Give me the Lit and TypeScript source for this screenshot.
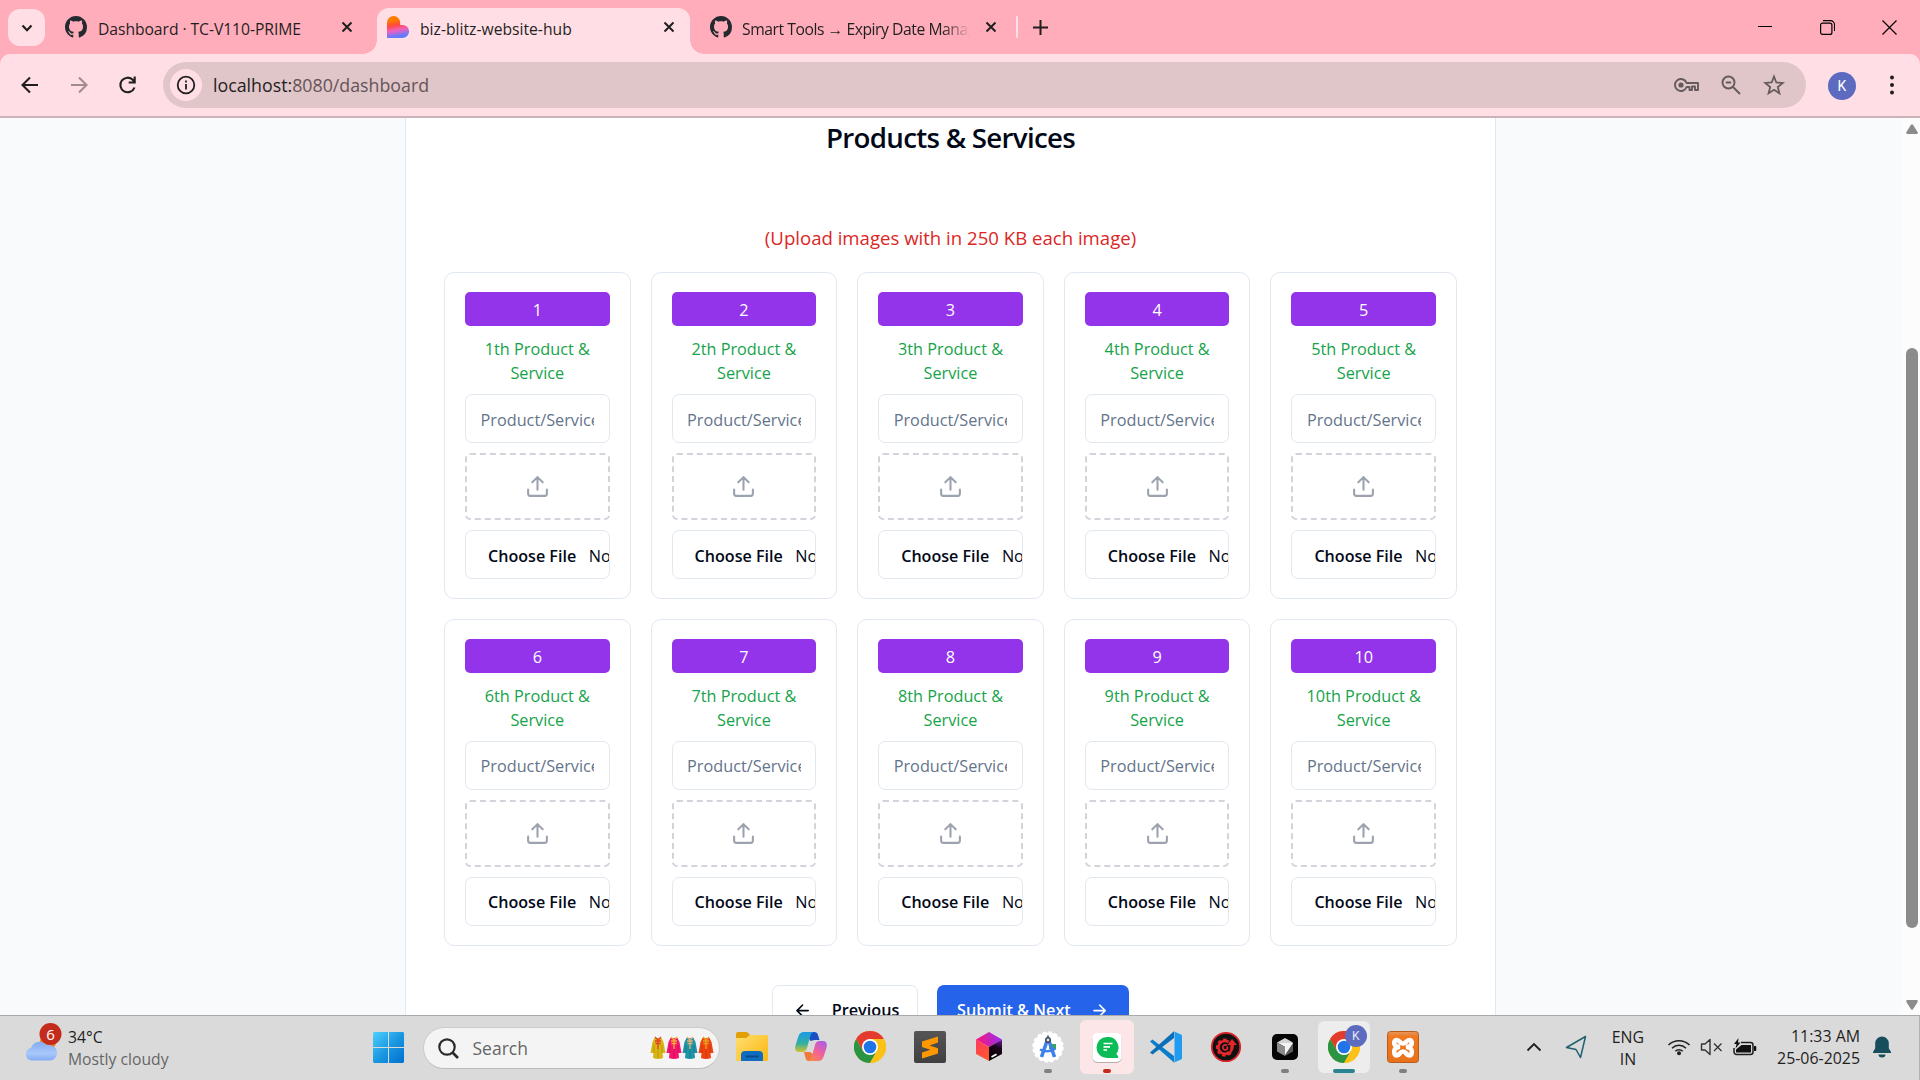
import { LitElement, html, svg, css, nothing } from "lit";
import { customElement, property } from "lit/decorators.js";
import { classMap } from "lit/directives/class-map.js";

const GITHUB =
  "M8 0C3.58 0 0 3.58 0 8c0 3.54 2.29 6.53 5.47 7.59.4.07.55-.17.55-.38 0-.19-.01-.82-.01-1.49-2.01.37-2.53-.49-2.69-.94-.09-.23-.48-.94-.82-1.13-.28-.15-.68-.52-.01-.53.63-.01 1.08.58 1.23.82.72 1.21 1.87.87 2.33.66.07-.52.28-.87.51-1.07-1.78-.2-3.64-.89-3.64-3.95 0-.87.31-1.59.82-2.15-.08-.2-.36-1.02.08-2.12 0 0 .67-.21 2.2.82.64-.18 1.32-.27 2-.27.68 0 1.36.09 2 .27 1.53-1.04 2.2-.82 2.2-.82.44 1.1.16 1.92.08 2.12.51.56.82 1.27.82 2.15 0 3.07-1.87 3.75-3.65 3.95.29.25.54.73.54 1.48 0 1.07-.01 1.93-.01 2.2 0 .21.15.46.55.38A8.013 8.013 0 0016 8c0-4.42-3.58-8-8-8z";

const icon = (size: number, box: number, body: unknown) =>
  html`<svg width=${size} height=${size} viewBox="0 0 ${box} ${box}" fill="none">${body}</svg>`;

const githubIcon = icon(22, 16, svg`<path fill="#24292f" d=${GITHUB} />`);

const closeIcon = icon(12, 12, svg`<path d="M1.500 1.500l9 9M10.500 1.500l-9 9" stroke="#1f1f1f" stroke-width="2" />`);

const heartIcon = icon(
  22,
  22,
  svg`<defs><linearGradient id="heart" x1="6" y1="0" x2="10" y2="22" gradientUnits="userSpaceOnUse">
      <stop offset=".2" stop-color="#ff7a00" /><stop offset=".42" stop-color="#ff4a3d" />
      <stop offset=".65" stop-color="#f060c0" /><stop offset=".95" stop-color="#5c7bff" /></linearGradient></defs>
    <path fill="url(#heart)" d="M0 6.600a6.600 6.600 0 0 1 13.200 0v2.300h2.300a6.500 6.500 0 0 1 0 13.100H0z" />`
);

/* Chrome's wheel, centred in a 32 unit box */
const chromeWheel = svg`
  <circle cx="16" cy="16" r="16" fill="#fbbc04" />
  <path fill="#e33b2e" d="M2.140 8A16 16 0 0 1 29.860 8H16l-6.900 12z" />
  <path fill="#2a9443" d="M2.140 8A16 16 0 0 0 16 32l6.930-12L16 16l-6.930 4z" />
  <path fill="#fbc116" d="M29.860 8A16 16 0 0 1 16 32l6.930-12A8 8 0 0 0 16 8z" />
  <circle cx="16" cy="16" r="8" fill="#fff" />
  <circle cx="16" cy="16" r="6.300" fill="#1f74e8" />`;

const appIcons = {
  explorer: svg`<defs><linearGradient id="fold" x1="0" y1="4" x2="26" y2="30" gradientUnits="userSpaceOnUse">
      <stop stop-color="#ffdf70" /><stop offset="1" stop-color="#fbbb1c" /></linearGradient></defs>
    <path fill="#e2a006" d="M0 3a2 2 0 0 1 2-2h9l3 3v6H0z" />
    <path fill="url(#fold)" d="M0 7h10l4-3h16.500a1.500 1.500 0 0 1 1.500 1.500v23a1.500 1.500 0 0 1-1.500 1.500H1.500A1.500 1.500 0 0 1 0 28.500z" />
    <path fill="#0f6cbf" d="M5 30v-6a4 4 0 0 1 4-4h14a4 4 0 0 1 4 4v6z" />
    <path stroke="#0a4a8c" stroke-width="1.800" stroke-linecap="round" d="M10.500 25.500h11.500" />`,
  copilot: svg`<defs>
      <linearGradient id="cpa" x1="8" y1="1" x2="8" y2="22" gradientUnits="userSpaceOnUse">
        <stop stop-color="#1a9be8" /><stop offset=".55" stop-color="#35b0a0" /><stop offset="1" stop-color="#e8c51a" /></linearGradient>
      <linearGradient id="cpb" x1="28" y1="9" x2="14" y2="30" gradientUnits="userSpaceOnUse">
        <stop stop-color="#a95bea" /><stop offset=".5" stop-color="#f0619a" /><stop offset="1" stop-color="#ff8b45" /></linearGradient></defs>
    <path fill="#1b4fc4" d="M10 1h9a4 4 0 0 1 4 3l1.500 5h-5l-4 1z" />
    <path fill="url(#cpa)" d="M9 1h9.500c-2 .5-2.700 2.500-3.300 4.500L12 17c-.8 2.800-2 4-4.500 4H4c-3.500 0-4.500-3-3.500-6.500l2.800-9C4.300 2.500 6 1 9 1z" />
    <path fill="#f07a3c" d="M9 21h6l3 2-2 7h-2.500c-1.500 0-2.300-1-2.800-2.500z" />
    <path fill="url(#cpb)" d="M23 30h-9.500c2-.5 2.700-2.500 3.300-4.500L20 14c.8-2.800 2-4 4.500-4H28c3.500 0 4.500 3 3.500 6.500l-2.800 9C27.700 28.500 26 30 23 30z" />`,
  chrome: chromeWheel,
  sublime: svg`<defs><linearGradient id="sub" x1="0" y1="0" x2="0" y2="1"><stop stop-color="#555" /><stop offset="1" stop-color="#404040" /></linearGradient></defs>
    <rect width="32" height="32" rx="2" fill="url(#sub)" />
    <path fill="#ff9800" d="M24 5.500v6l-8.500 3L24 17.300v5.200L8 27.500v-6l8.500-2.800L8 16v-5.500z" />`,
  hexagon: svg`<defs>
      <linearGradient id="hxa" x1="3" y1="10" x2="14" y2="30" gradientUnits="userSpaceOnUse"><stop stop-color="#ff3b5c" /><stop offset="1" stop-color="#ff5a2a" /></linearGradient>
      <linearGradient id="hxb" x1="5" y1="9" x2="28" y2="5" gradientUnits="userSpaceOnUse"><stop stop-color="#f3187f" /><stop offset="1" stop-color="#9a2df0" /></linearGradient>
      <linearGradient id="hxc" x1="28" y1="8" x2="20" y2="30" gradientUnits="userSpaceOnUse"><stop stop-color="#7a1db0" /><stop offset=".4" stop-color="#1c0618" /><stop offset="1" stop-color="#000" /></linearGradient></defs>
    <path fill="url(#hxb)" d="M16 1 29 8.500 16 16 3 8.500z" /><path fill="url(#hxa)" d="M3 8.500 16 16v14L3 23z" />
    <path fill="url(#hxc)" d="M29 8.500V23l-13 7V16z" /><path stroke="#fff" stroke-width="1.800" d="m18.500 26 5-2.800" />`,
  studio: svg`<circle cx="16" cy="16" r="14.600" fill="#fff" /><circle cx="16" cy="16" r="14.800" stroke="#fff" stroke-width="1.800" stroke-dasharray="3.600 2.200" />
    <path fill="#36a852" d="M17 13h7v5h-7z" />
    <path stroke="#3f7fe8" stroke-width="3.600" d="M15.500 8.500 9.500 26M16.500 8.500l6 17.500" />
    <path stroke="#3f7fe8" stroke-width="2.400" d="M8 18.500q8 4 15.500-1" />
    <circle cx="16" cy="9" r="2.200" stroke="#3c4650" stroke-width="1.500" fill="#dfe6ee" /><path stroke="#3c4650" stroke-width="1.500" d="M16 4.500V7" />`,
  chat: svg`<rect x="1.500" y="3" width="29" height="29" rx="5" fill="#9c9195" opacity=".7" /><rect x="1.500" y="2" width="29" height="29" rx="5" fill="#fff" />
    <path fill="#0cbc56" d="M16 6a10.500 10.500 0 1 0 0 21h10.500c1 0 1-1.500.3-2.300l-1.500-1.800A10.500 10.500 0 0 0 16 6z" />
    <path stroke="#fff" stroke-width="1.700" d="M12.500 12.500h9M12.500 15.800h6.500M12.500 19h3.500" />`,
  code: svg`<path fill="#0a7dcb" d="M0 10.500 2.500 8.500 24 25v6.500z" /><path fill="#0a6fb8" d="M0 21.500l2.500 2L24 7V.300z" />
    <path fill="#1f9cf0" d="M23.500.2 31 3.500a1.500 1.500 0 0 1 1 1.400v22.200a1.500 1.500 0 0 1-1 1.400l-7.500 3.300c1-.6 1-1.300 1-2.300V2.500c0-1 0-1.700-1-2.300z" />`,
  gear: svg`<circle cx="16" cy="16" r="14.200" fill="#111" stroke="#d9262b" stroke-width="1.800" />
    <path stroke="#e3272c" stroke-width="3" stroke-dasharray="3.200 2.300" d="M20.500 21.500A7.500 7.500 0 1 1 19 10.200" />
    <path stroke="#e3272c" stroke-width="2.600" d="M19.500 21A6.500 6.500 0 1 1 18.500 11" />
    <path fill="#e3272c" d="m22 8 5 6h-3c0 4.500-2 8.500-7 10.500 2.800-3 3.500-6.500 3.400-10.500h-3z" />
    <path stroke="#e3272c" stroke-width="1.700" d="M17 14.500a2.500 2.500 0 1 0 .3 3.400l.2-2.400" />`,
  cube: svg`<rect x="3" y="3" width="26" height="26" rx="5" fill="#050505" />
    <path fill="#d4d4d4" d="m16 7 8 4.500-8 4.500-8-4.500z" /><path fill="#8b8b8b" d="m8 11.500 8 4.500v9l-8-4.500z" /><path fill="#5a5a5a" d="M24 11.500 16 16v9l8-4.500z" /><path fill="#f4f4f4" d="M10 12h14l-8 12v-8.500z" />`,
  xampp: svg`<defs><linearGradient id="xam" x1="0" y1="0" x2="0" y2="1"><stop stop-color="#e59a60" /><stop offset=".15" stop-color="#f07a24" /><stop offset="1" stop-color="#e8721c" /></linearGradient></defs>
    <rect x=".5" y=".5" width="31" height="31" rx="3" fill="url(#xam)" stroke="#b85c1a" />
    <path stroke="#fff" stroke-width="4.600" stroke-linejoin="round" stroke-linecap="round" d="M11 15.500C6.500 16 6 9 9.500 9s3 3.500 6.500 3.500S19 9 22.500 9s3 7-1.500 6.500M11 16.500C6.500 16 6 24.500 9.500 24.500s3-4 6.500-4 3 4 6.500 4 3-8.500-1.500-8" />
    <path stroke="#fff" stroke-width="2.500" d="M9 16h3M20 16h3" />`,
};

type AppName = keyof typeof appIcons;
interface TaskApp { name: AppName; state?: "alert" | "active"; mark?: boolean; }

const apps: TaskApp[] = [
  { name: "explorer" },
  { name: "copilot" },
  { name: "chrome" },
  { name: "sublime" },
  { name: "hexagon" },
  { name: "studio", mark: true },
  { name: "chat", state: "alert", mark: true },
  { name: "code" },
  { name: "gear" },
  { name: "cube", mark: true },
  { name: "chrome", state: "active", mark: true },
  { name: "xampp", mark: true },
];

@customElement("product-card")
class ProductCard extends LitElement {
  @property({ type: Number }) index = 1;

  static styles = css`
    :host {
      display: flex;
      flex-direction: column;
      gap: 10px;
      box-sizing: border-box;
      min-width: 0;
      padding: 19px 20px 0;
      border: 1px solid #e2e8f0;
      border-radius: 10px;
      font-size: 16.250px;
    }
    .number {
      height: 34px;
      box-sizing: border-box;
      padding-top: 2px;
      line-height: 33px;
      border-radius: 5px;
      background: #9333ea;
      color: #fff;
      text-align: center;
    }
    .label {
      height: 48px;
      box-sizing: border-box;
      padding-top: 1px;
      line-height: 24px;
      color: #16a34a;
      text-align: center;
      white-space: nowrap;
    }
    .field {
      height: 49px;
      flex: none;
      box-sizing: border-box;
      border: 1px solid #e2e8f0;
      border-radius: 7px;
      display: flex;
      align-items: center;
      overflow: hidden;
      white-space: nowrap;
    }
    .name { padding: 2px 14.500px 0; color: #64748b; }
    .name span { overflow: hidden; flex: 1; min-width: 0; line-height: 24px; }
    .file { padding: 2px 0 0 22px; gap: 12.500px; color: #020817; }
    .file b { font-weight: 600; font-size: 16.100px; }
    .drop {
      height: 67px;
      box-sizing: border-box;
      border: 2px dashed #d1d5db;
      border-radius: 5px;
      display: flex;
      align-items: center;
      justify-content: center;
    }
  `;

  render() {
    return html`
      <div class="number">${this.index}</div>
      <div class="label">${this.index}th Product &amp;<br />Service</div>
      <div class="field name"><span>Product/Service Name</span></div>
      <div class="drop">
        ${icon(
          25,
          24,
          svg`<path d="M21 15v4a2 2 0 0 1-2 2H5a2 2 0 0 1-2-2v-4M17 8l-5-5-5 5M12 3v12" stroke="#9ca3af" stroke-width="2" stroke-linecap="round" stroke-linejoin="round" />`
        )}
      </div>
      <div class="field file"><b>Choose File</b><span>No file chosen</span></div>
    `;
  }
}

@customElement("app-root")
class AppRoot extends LitElement {
  static styles = css`
    :host {
      display: flex;
      flex-direction: column;
      width: 1920px;
      height: 1080px;
      overflow: hidden;
      font-family: "Open Sans", "Noto Sans", sans-serif;
      color: #1f1f1f;
      background: #fff;
    }
    * { box-sizing: border-box; }
    svg { display: block; flex: none; }

    .strip { display: flex; height: 54px; background: #ffadbb; flex: none; }
    .search-tabs {
      width: 37px; height: 37px; margin: 9px 10px 0 8px; border-radius: 12px;
      background: #ffdfe5; display: flex; align-items: center; justify-content: center;
    }
    .tab { display: flex; align-items: center; height: 46px; margin-top: 8px; padding: 0 15px 8px 10px; font-size: 15.700px; }
    .tab .title { flex: 1; margin-left: 11px; white-space: nowrap; overflow: hidden; line-height: 24px; padding-top: 3px; }
    .tab.first { width: 312px; padding-right: 14px; margin-right: 10px; }
    .tab.first .title { letter-spacing: -0.060px; }
    .tab.current { width: 313px; background: #ffdfe5; border-radius: 12px 12px 0 0; position: relative; }
    .tab.current::before, .tab.current::after {
      content: ""; position: absolute; bottom: 0; width: 14px; height: 14px;
    }
    .tab.current::before { left: -14px; background: radial-gradient(circle at 0 0, #ffadbb 13.500px, #ffdfe5 14px); }
    .tab.current::after { right: -14px; background: radial-gradient(circle at 100% 0, #ffadbb 13.500px, #ffdfe5 14px); }
    .tab.last { width: 316px; margin-left: 10px; padding-right: 19px; }
    .tab.last .title {
      flex: none; width: 228px; margin-left: 10px; letter-spacing: -0.450px;
      mask-image: linear-gradient(90deg, #000 88%, transparent 100%);
      -webkit-mask-image: linear-gradient(90deg, #000 88%, transparent 100%);
    }
    .tab.last svg:last-child { margin-left: auto; }
    .divider { width: 2px; height: 22px; margin-top: 16px; background: #ffdfe5; border-radius: 1px; }
    .new-tab { margin: 19.500px 0 0 15px; }
    .window-buttons { display: flex; margin: 20px 23.500px 0 auto; gap: 47px; }

    .toolbar-wrap { background: #ffadbb; flex: none; }
    .toolbar {
      display: flex; align-items: center; height: 64px; padding: 0 20px 0 20px;
      background: #ffdfe5; border-radius: 10px 10px 0 0; border-bottom: 2px solid #cdb3b8;
    }
    .toolbar > svg { margin-right: 28.500px; }
    .address {
      display: flex; align-items: center; width: 1643px; height: 46px; border-radius: 24px;
      background: #e0c5c9; padding: 0 20px 0 7px; margin-left: -2.500px;
    }
    .info { width: 32px; height: 32px; border-radius: 50%; background: #ffdfe5; display: flex; align-items: center; justify-content: center; }
    .url { flex: 1; margin-left: 11px; font-size: 17.800px; color: #655457; }
    .url span { color: #1f1f1f; }
    .address-icons { display: flex; align-items: center; gap: 20px; }
    .avatar {
      width: 28px; height: 28px; border-radius: 50%; background: #5c6bc0; color: #fff; margin: 1px 33px 0 22px;
      font: 14px/28px Roboto, sans-serif; text-align: center;
    }
    .toolbar > svg.dots { margin: 0; }

    .viewport { display: flex; height: 897px; flex: none; background: #f8fafc; overflow: hidden; }
    .page { flex: 1; display: flex; justify-content: center; }
    .panel {
      width: 1091px; height: 1000px; background: #fff; border: solid #e2e8f0; border-width: 0 1px;
      padding: 0 38px; display: flex; flex-direction: column; flex: none;
    }
    h1 {
      margin: 0; height: 38px; line-height: 38px; text-align: center; color: #020817;
      font-size: 27.700px; font-weight: 600; letter-spacing: -0.720px;
    }
    .note { margin-top: 67px; height: 29px; line-height: 29px; text-align: center; color: #dc2626; font-size: 18.600px; }
    .grid {
      display: grid; grid-template-columns: repeat(5, minmax(0, 1fr)); gap: 20px; margin: 20px 0 39.500px;
      grid-auto-rows: 326.800px;
    }
    .actions { display: flex; justify-content: center; gap: 19px; font-size: 16.250px; font-weight: 600; }
    .button { height: 50px; display: flex; align-items: center; border-radius: 7px; white-space: nowrap; }
    .previous { width: 146px; border: 1px solid #e2e8f0; color: #020817; padding-left: 20px; gap: 19.500px; }
    .submit { width: 192px; background: #2563eb; color: #fff; padding-left: 20px; gap: 19px; }
    .scrollbar { width: 19px; background: #fcfcfc; display: flex; flex-direction: column; align-items: center; padding: 6px 0 5px 3px; }
    .thumb { width: 12px; height: 580px; margin: 214px 0 auto; border-radius: 6px; background: #8b8b8b; }

    .taskbar {
      display: flex; height: 65px; flex: none; background: #dadada; border-top: 1px solid #a9a9a9;
      border-right: 1px solid #b4b4b4; padding-left: 24px;
    }
    .weather { width: 349px; display: flex; margin-top: 6px; gap: 5px; font-size: 15.700px; line-height: 22px; }
    .weather > div { padding-top: 4px; }
    .weather p { margin: 0; }
    .muted { color: #666; }
    .start { margin-top: 16px; }
    .search {
      display: flex; align-items: center; width: 297px; height: 42px; margin: 11px 0 0 18.500px; border-radius: 21px;
      background: #f4f4f4; border: 1px solid #cbcbcb; border-bottom-color: #bcbcbc; padding: 0 5px 0 14px; color: #666; font-size: 17.500px;
    }
    .search span { flex: 1; margin-left: 14px; }
    .apps { display: flex; gap: 5.200px; margin: 4px 0 0 5.500px; }
    .app { width: 54px; height: 54px; border-radius: 6px; display: flex; align-items: center; justify-content: center; position: relative; }
    .app.alert { background: #fde6e8; }
    .app.active { background: #ededed; width: 52px; margin: 1px; height: 52px; }
    .mark { position: absolute; bottom: 1px; left: 23px; width: 8px; height: 4px; border-radius: 2px; background: #7f7f7f; }
    .alert .mark { background: #c42b1c; }
    .active .mark { background: #2a8390; width: 22px; left: 15px; bottom: 0; }
    .app-badge {
      position: absolute; top: 4px; right: 3px; width: 22px; height: 22px; border-radius: 50%; background: #5c6bc0;
      color: #e4e7f6; font: 12px/22px Roboto, sans-serif; text-align: center;
    }
    .tray { display: flex; margin-left: auto; align-items: center; padding: 0 27px 2px 0; }
    .tray .lang, .tray .clock { font-size: 15.900px; line-height: 22px; text-align: center; color: #1f1f1f; }
    .tray .nav { margin-left: 23px; }
    .tray .lang { margin: 2px 0 0 24.500px; }
    .tray .wifi { margin-left: 23px; }
    .tray .sound { margin-left: 9px; }
    .tray .power { margin-left: 10px; }
    .tray .clock { text-align: right; margin-left: 20px; }
    .tray .bell { margin-left: 12px; }
  `;

  private cloud = html`<svg width="39" height="40" viewBox="0 0 39 40" fill="none">
    <defs><linearGradient id="cl" x1="0" y1="18" x2="0" y2="40" gradientUnits="userSpaceOnUse">
      <stop stop-color="#7ba6f0" /><stop offset=".6" stop-color="#a9c8fa" /><stop offset="1" stop-color="#7da6f2" /></linearGradient></defs>
    <circle cx="24" cy="20" r="8" fill="#f07d1a" />
    <path fill="url(#cl)" d="M7.500 38.500a6.300 6.300 0 0 1-.5-12.400A9 9 0 0 1 22.500 23a6.800 6.800 0 0 1 4 .2 7.700 7.700 0 0 1-.5 15.300z" />
    <circle cx="26.500" cy="12" r="11" fill="#c42b1c" />
    <text x="26.500" y="17.500" font-size="15" fill="#fff" text-anchor="middle">6</text>
  </svg>`;

  private kurtas = html`<svg width="64" height="24" viewBox="0 0 64 24" fill="none">
    ${[
      ["#d9b514", "#e0402a"],
      ["#f5146e", "#f0b030"],
      ["#1f93a8", "#e8b070"],
      ["#ee4410", "#e8a020"],
    ].map(
      ([body, trim], i) => svg`<g transform="translate(${i * 16} 0)">
        <path fill=${body} d="M4.500 2h7l2 4 2 11h-3l.5 5q-5 2-10 0l.5-5h-3L2.500 6z" />
        <path stroke=${trim} stroke-width="1.300" d="M5 1l3 3 3-3M5 5h6M5.500 7.500h5M8 4v9" />
        <path stroke="#0003" stroke-width=".8" d="M4 9v8M12 9v8M8 13v9" /></g>`
    )}
  </svg>`;

  private renderApp(app: TaskApp) {
    return html`<div class=${classMap({ app: true, alert: app.state === "alert", active: app.state === "active" })}>
      ${icon(32, 32, appIcons[app.name])}
      ${app.state === "active" ? html`<span class="app-badge">K</span>` : nothing}
      ${app.mark ? html`<span class="mark"></span>` : nothing}
    </div>`;
  }

  private renderTray() {
    return html`<div class="tray">
      <svg width="16" height="10" viewBox="0 0 16 10" fill="none"><path d="m1.500 8.500 6.500-6.500 6.500 6.500" stroke="#1f1f1f" stroke-width="1.800" /></svg>
      <svg class="nav" width="22" height="24" viewBox="0 0 22 24" fill="none"><path d="M20.500 1.500 1.500 12.500l9.500 2 4.500 8z" stroke="#1f6070" stroke-width="1.500" stroke-linejoin="round" /></svg>
      <div class="lang">ENG<br />IN</div>
      <svg class="wifi" width="24" height="18" viewBox="0 0 24 18" fill="none">
        <path d="M1.500 7a15 15 0 0 1 21 0M5 10.200a10 10 0 0 1 14 0M8.300 13.200a5.300 5.300 0 0 1 7.400 0" stroke="#1f1f1f" stroke-width="1.500" /><circle cx="12" cy="15.300" r="2" fill="#1f1f1f" /></svg>
      <svg class="sound" width="23" height="18" viewBox="0 0 23 18" fill="none">
        <path d="M1.500 6v6h3.500l5 4.500v-15L5 6z" stroke="#333" stroke-width="1.400" stroke-linejoin="round" /><path d="m14 5.500 7.500 7.500m0-7.500L14 13" stroke="#333" stroke-width="1.300" /></svg>
      <svg class="power" width="24" height="19" viewBox="0 0 24 19" fill="none">
        <path d="M8 4.500h9.500a2.500 2.500 0 0 1 2.500 2.500v7a2.500 2.500 0 0 1-2.500 2.500h-14A2.500 2.500 0 0 1 1 14v-4" stroke="#1f1f1f" stroke-width="1.500" />
        <path d="M3 14.500v-3L8.500 7h9.500v7.500z" fill="#111" /><path d="M21 8h1.300q1 0 1 1v3q0 1-1 1H21z" fill="#111" /><path d="M5.500 0 1 6h2.500L2.500 10.500 7.500 4.500H5z" fill="#111" /></svg>
      <div class="clock">11:33 AM<br />25-06-2025</div>
      <svg class="bell" width="20" height="22" viewBox="0 0 20 22" fill="#164e5c">
        <path d="M10 .5a6.800 6.800 0 0 1 6.800 6.800v5L19 16v1H1v-1l2.200-3.700v-5A6.800 6.800 0 0 1 10 .5zM6.500 18.500h7a3.500 3 0 0 1-7 0z" /></svg>
    </div>`;
  }

  render() {
    return html`
      <div class="strip">
        <div class="search-tabs">${icon(12, 12, svg`<path d="m1.500 3.500 4.500 4.700 4.500-4.700" stroke="#1f1f1f" stroke-width="2.200" />`)}</div>
        <div class="tab first">${githubIcon}<span class="title">Dashboard · TC-V110-PRIME</span>${closeIcon}</div>
        <div class="tab current">${heartIcon}<span class="title">biz-blitz-website-hub</span>${closeIcon}</div>
        <div class="tab last">${githubIcon}<span class="title">Smart Tools → Expiry Date Manager</span>${closeIcon}</div>
        <div class="divider"></div>
        <div class="new-tab">${icon(15, 15, svg`<path d="M7.500 0v15M0 7.500h15" stroke="#1f1f1f" stroke-width="2" />`)}</div>
        <div class="window-buttons">
          ${icon(15, 15, svg`<path d="M0 6.500h14" stroke="#000" />`)}
          ${icon(15, 15, svg`<rect x=".6" y="3.100" width="11.300" height="11.300" rx="2" stroke="#000" stroke-width="1.200" /><path d="M3 .6h7.500a4 4 0 0 1 4 4V11" stroke="#000" stroke-width="1.100" />`)}
          ${icon(15, 15, svg`<path d="m.5.5 14 14m0-14-14 14" stroke="#000" stroke-width="1.200" />`)}
        </div>
      </div>
      <div class="toolbar-wrap">
        <div class="toolbar">
          ${icon(20, 20, svg`<path d="M18 10H3M10 2.500 2.500 10l7.500 7.500" stroke="#1f1f1f" stroke-width="2.100" />`)}
          ${icon(20, 20, svg`<path d="M2 10h15M10 2.500l7.500 7.500-7.500 7.500" stroke="#a08c90" stroke-width="2.100" />`)}
          ${icon(20, 20, svg`<path d="M17.500 12.500A7.300 7.300 0 1 1 16 5l1.500 2M17.700 1.500v6h-6" stroke="#1f1f1f" stroke-width="2.100" />`)}
          <div class="address">
            <div class="info">${icon(20, 20, svg`<circle cx="10" cy="10" r="8.300" stroke="#1f1f1f" stroke-width="1.800" /><path d="M10 9v5.500M10 5.500v2" stroke="#1f1f1f" stroke-width="1.800" />`)}</div>
            <div class="url"><span>localhost:</span>8080/dashboard</div>
            <div class="address-icons">
              <svg width="26" height="16" viewBox="0 0 26 16" fill="none"><path d="M12.600 6H24v7h-3v-3.500h-3V13h-2.500v-3h-2.900a6 6 0 1 1 0-4z" stroke="#655b5d" stroke-width="1.900" stroke-linejoin="round" /><circle cx="7" cy="8" r="2.600" fill="#655b5d" /></svg>
              ${icon(22, 22, svg`<circle cx="8.500" cy="8.500" r="6" stroke="#655b5d" stroke-width="1.900" /><path d="m13 13 7 7M5.800 8.500h5.400" stroke="#655b5d" stroke-width="1.900" />`)}
              ${icon(24, 24, svg`<path d="m12 3.500 2.300 6 6.400.4-4.900 4.100 1.600 6.200L12 16.800l-5.400 3.400 1.600-6.200-4.900-4.100 6.400-.4z" stroke="#655b5d" stroke-width="1.800" />`)}
            </div>
          </div>
          <div class="avatar">K</div>
          <svg class="dots" width="6" height="22" viewBox="0 0 6 22" fill="#1f1f1f"><circle cx="3" cy="3.500" r="2" /><circle cx="3" cy="11" r="2" /><circle cx="3" cy="18.500" r="2" /></svg>
        </div>
      </div>
      <div class="viewport">
        <div class="page">
          <div class="panel">
            <h1>Products &amp; Services</h1>
            <div class="note">(Upload images with in 250 KB each image)</div>
            <div class="grid">
              ${Array.from({ length: 10 }, (_, i) => html`<product-card .index=${i + 1}></product-card>`)}
            </div>
            <div class="actions">
              <div class="button previous">${icon(19.2, 24, svg`<path d="m12 19-7-7 7-7M19 12H5" stroke="#020817" stroke-width="2" stroke-linecap="round" stroke-linejoin="round" />`)}<span>Previous</span></div>
              <div class="button submit"><span>Submit &amp; Next</span>${icon(19.2, 24, svg`<path d="M5 12h14M12 5l7 7-7 7" stroke="#fff" stroke-width="2" stroke-linecap="round" stroke-linejoin="round" />`)}</div>
            </div>
          </div>
        </div>
        <div class="scrollbar">
          <svg width="12" height="10" viewBox="0 0 12 10" fill="#8b8b8b"><path d="M5 .8q1-1.300 2 0l4.700 7.500q.5 1.700-1 1.700H1.300q-1.500 0-1-1.700z" /></svg>
          <div class="thumb"></div>
          <svg width="12" height="10" viewBox="0 0 12 10" fill="#8b8b8b"><path d="M5 9.200q1 1.300 2 0l4.700-7.500Q12.200 0 10.700 0H1.300Q-.2 0 .3 1.700z" /></svg>
        </div>
      </div>
      <div class="taskbar">
        <div class="weather">${this.cloud}<div><p>34°C</p><p class="muted">Mostly cloudy</p></div></div>
        <div class="start">
          ${icon(31, 31, svg`<defs><linearGradient id="win" x1="0" y1="0" x2="31" y2="31" gradientUnits="userSpaceOnUse"><stop stop-color="#50d0ff" /><stop offset=".5" stop-color="#1b98e0" /><stop offset="1" stop-color="#0070d0" /></linearGradient></defs>
            <path fill="url(#win)" d="M1 0h14v15H0V1zM16 0h14l1 1v14H16zM0 16h15v15H1l-1-1zM16 16h15v14l-1 1H16z" />`)}
        </div>
        <div class="search">
          ${icon(21, 21, svg`<circle cx="9" cy="9" r="7.700" stroke="#2b2b2b" stroke-width="2.200" /><path d="m14.500 14.500 5.500 5.500" stroke="#2b2b2b" stroke-width="2.600" />`)}
          <span>Search</span>${this.kurtas}
        </div>
        <div class="apps">${apps.map((a) => this.renderApp(a))}</div>
        ${this.renderTray()}
      </div>
    `;
  }
}
